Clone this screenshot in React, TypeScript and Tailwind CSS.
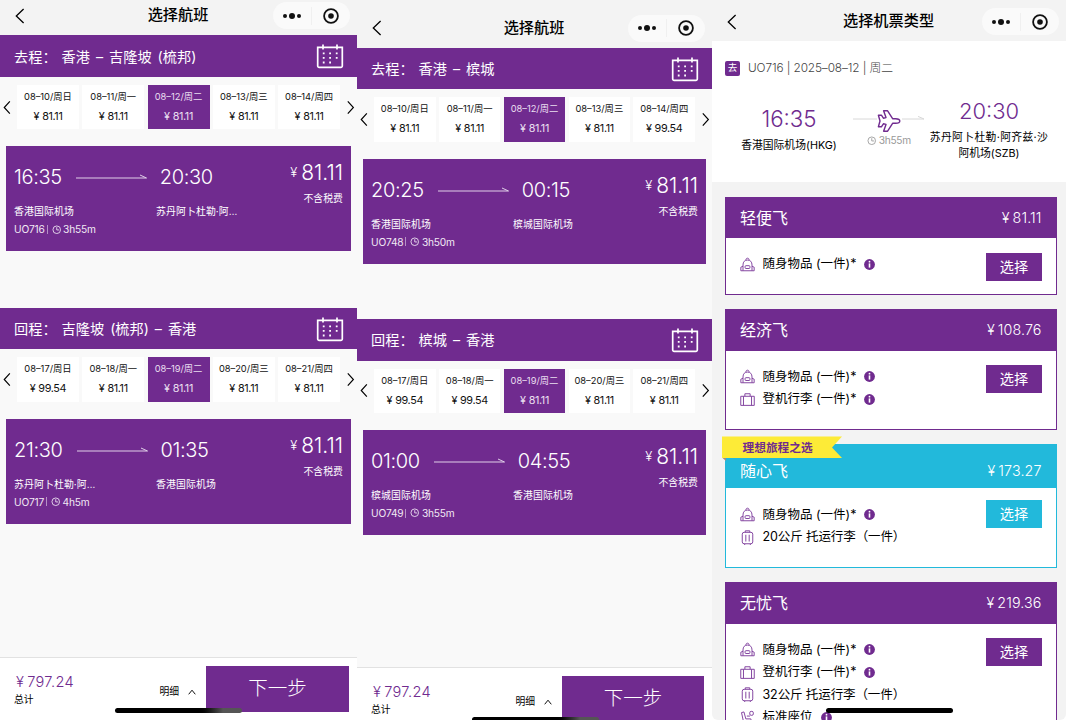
import type { ReactNode } from "react";
import clsx from "clsx";

type Day = [date: string, price: string];

type Leg = {
  label: string;
  route: string;
  days: Day[];
  depart: string;
  arrive: string;
  from: string;
  to: string;
  flight: string;
  duration: string;
};

type Perk = { icon: "backpack" | "briefcase" | "suitcase" | "seat"; text: string; info?: boolean };

type Fare = { name: string; price: string; perks: Perk[]; badge?: string; height: string };

const KUL: Leg[] = [
  {
    label: "去程：",
    route: "香港 – 吉隆坡 (梳邦)",
    days: [
      ["08–10/周日", "81.11"],
      ["08–11/周一", "81.11"],
      ["08–12/周二", "81.11"],
      ["08–13/周三", "81.11"],
      ["08–14/周四", "81.11"],
    ],
    depart: "16:35",
    arrive: "20:30",
    from: "香港国际机场",
    to: "苏丹阿卜杜勒·阿…",
    flight: "UO716",
    duration: "3h55m",
  },
  {
    label: "回程：",
    route: "吉隆坡 (梳邦) – 香港",
    days: [
      ["08–17/周日", "99.54"],
      ["08–18/周一", "81.11"],
      ["08–19/周二", "81.11"],
      ["08–20/周三", "81.11"],
      ["08–21/周四", "81.11"],
    ],
    depart: "21:30",
    arrive: "01:35",
    from: "苏丹阿卜杜勒·阿…",
    to: "香港国际机场",
    flight: "UO717",
    duration: "4h5m",
  },
];

const PEN: Leg[] = [
  {
    label: "去程：",
    route: "香港 – 槟城",
    days: [
      ["08–10/周日", "81.11"],
      ["08–11/周一", "81.11"],
      ["08–12/周二", "81.11"],
      ["08–13/周三", "81.11"],
      ["08–14/周四", "99.54"],
    ],
    depart: "20:25",
    arrive: "00:15",
    from: "香港国际机场",
    to: "槟城国际机场",
    flight: "UO748",
    duration: "3h50m",
  },
  {
    label: "回程：",
    route: "槟城 – 香港",
    days: [
      ["08–17/周日", "99.54"],
      ["08–18/周一", "99.54"],
      ["08–19/周二", "81.11"],
      ["08–20/周三", "81.11"],
      ["08–21/周四", "81.11"],
    ],
    depart: "01:00",
    arrive: "04:55",
    from: "槟城国际机场",
    to: "香港国际机场",
    flight: "UO749",
    duration: "3h55m",
  },
];

const BACKPACK: Perk = { icon: "backpack", text: "随身物品 (一件)*", info: true };
const CABIN: Perk = { icon: "briefcase", text: "登机行李 (一件)*", info: true };

const FARES: Fare[] = [
  { name: "轻便飞", price: "81.11", perks: [BACKPACK], height: "h-[98px]" },
  { name: "经济飞", price: "108.76", perks: [BACKPACK, CABIN], height: "h-[121px]" },
  {
    name: "随心飞",
    price: "173.27",
    perks: [BACKPACK, { icon: "suitcase", text: "20公斤 托运行李（一件）" }],
    badge: "理想旅程之选",
    height: "h-[123.4px]",
  },
  {
    name: "无忧飞",
    price: "219.36",
    perks: [
      BACKPACK,
      CABIN,
      { icon: "suitcase", text: "32公斤 托运行李（一件）" },
      { icon: "seat", text: "标准座位", info: true },
    ],
    height: "h-[170px]",
  },
];

function Chevron({ d, className }: { d: string; className?: string }) {
  return (
    <svg viewBox="0 0 10 16" className={className} fill="none" stroke="currentColor" strokeWidth="1.3">
      <path d={d} />
    </svg>
  );
}

function Clock({ className }: { className?: string }) {
  return (
    <svg viewBox="0 0 10 10" className={className} fill="none" stroke="currentColor" strokeWidth="0.9">
      <circle cx="5" cy="5" r="4" />
      <path d="M5 2.3V5.2H7.6" />
    </svg>
  );
}

function Calendar() {
  return (
    <svg viewBox="0 0 28 26" className="h-[26px] w-7" fill="none" stroke="#fff">
      <path d="M1.7 4.4H26.3V23a1.4 1.4 0 0 1-1.4 1.4H3.1A1.4 1.4 0 0 1 1.7 23Z" strokeWidth="1.7" />
      <path d="M7 1.4V6.4M21 1.4V6.4" strokeWidth="1.7" />
      <path
        d="M6.8 10.3h1.8M13.2 10.3h1.8M19.8 10.3h1.8M6.8 14.9h1.8M13.2 14.9h1.8M19.8 14.9h1.8M6.8 19.5h1.8M13.2 19.5h1.8"
        strokeWidth="1.8"
      />
    </svg>
  );
}

function InfoDot() {
  return (
    <svg viewBox="0 0 11 11" className="-mt-px h-[11px] w-[11px]">
      <circle cx="5.5" cy="5.5" r="5.4" fill="#702b8f" />
      <path d="M5.5 4.4V8.6" stroke="#fff" strokeWidth="1.6" fill="none" />
      <circle cx="5.5" cy="2.7" r="0.9" fill="#fff" />
    </svg>
  );
}

function PerkIcon({ name }: { name: Perk["icon"] }) {
  return (
    <svg viewBox="0 0 16 16" className="h-[15.5px] w-[15px] shrink-0" fill="none" stroke="#8344a0" strokeWidth="1.05">
      {name === "backpack" && (
        <>
          <path d="M3.2 14.4V8.2C3.2 4.8 5.1 3 8 3s4.8 1.8 4.8 5.2v6.2Z" />
          <path d="M6.3 3C6.3 1.7 7 1 8 1s1.7.7 1.7 2M3.2 9.6.9 10.6v3.8h2.3M12.8 9.6l2.3 1v3.8h-2.3" />
          <rect x="5.4" y="9" width="5.2" height="3" rx="1" />
        </>
      )}
      {name === "briefcase" && <path d="M.8 4.3H15.2V14H.8ZM3.7 4.3V14M12.3 4.3V14M5.2 4.2V1.6H10.8V4.2" />}
      {name === "suitcase" && (
        <>
          <rect x="2.4" y="2.2" width="11.2" height="12.2" rx="2" />
          <path d="M5.6 2.2V.6H10.4V2.2M5 14.4v1.3M11 14.4v1.3" />
          <path d="M6.2 4.8V12M9.8 4.8V12" />
        </>
      )}
      {name === "seat" && (
        <>
          <path d="M1.6 2.5 4.2 1.8 6.2 9.2H11.5L13 14.5M1.6 2.5 3.6 11.6H9.5L10.6 14.5M4 14.5V11.6M7.3 6.2H10.6" />
          <rect x="10.4" y="1.2" width="3.8" height="4.2" rx="1.5" />
        </>
      )}
    </svg>
  );
}

function TopBar({ title, className }: { title: string; className?: string }) {
  return (
    <header className={clsx("flex shrink-0 items-end bg-[#f3f3f3]", className)}>
      <div className="flex h-[27px] w-full items-center">
        <div className="w-[83px] pl-[15px]">
          <Chevron d="M8.6 1 1.3 8l7.3 7" className="h-4 w-2.5" />
        </div>
        <h1 className="flex-1 text-center text-[15.2px] font-medium">{title}</h1>
        <div className="mr-[7px] flex h-[27px] w-[77px] items-center rounded-full bg-[#fafafa]">
          <div className="flex flex-1 items-center justify-center gap-[2px]">
            <i className="h-1 w-1 rounded-full bg-[#111]" />
            <i className="h-1.5 w-1.5 rounded-full bg-[#111]" />
            <i className="h-1 w-1 rounded-full bg-[#111]" />
          </div>
          <div className="h-[18px] w-px bg-[#f0f0f0]" />
          <div className="flex flex-1 justify-center">
            <svg viewBox="0 0 16 16" className="h-4 w-4">
              <circle cx="8" cy="8" r="6.9" fill="none" stroke="#111" strokeWidth="1.8" />
              <circle cx="8" cy="8" r="2.8" fill="#111" />
            </svg>
          </div>
        </div>
      </div>
    </header>
  );
}

function Yen({ children, className }: { children: ReactNode; className?: string }) {
  return (
    <span className={clsx("whitespace-nowrap", className)}>
      <span className="mr-[3px]">¥</span>
      {children}
    </span>
  );
}

function LegBlock({ leg, className }: { leg: Leg; className?: string }) {
  return (
    <section className={clsx("shrink-0", className)}>
      <div className="flex h-[41.6px] items-center justify-between bg-[#702b8f] pr-[13px] pl-[14px] text-[14.2px] text-white">
        <h2 className="[word-spacing:2px]">
          <span className="mr-[5px]">{leg.label}</span>
          {leg.route}
        </h2>
        <Calendar />
      </div>
      <div className="flex items-center justify-between pt-[8px] pr-[2px] pl-[3px]">
        <Chevron d="M7.6 1.2 1.4 8 7.6 14.8" className="h-[15px] w-[9px]" />
        <ul className="flex flex-1 gap-[3.3px] pr-[6px] pl-[5px]">
          {leg.days.map(([date, price], i) => (
            <li
              key={date}
              className={clsx(
                "flex h-[44.4px] flex-1 flex-col items-center",
                i === 2 ? "bg-[#702b8f] text-[#eadff0]" : "bg-white text-[#111]"
              )}
            >
              <span className="mt-[4px] text-[9.3px] leading-4 whitespace-nowrap">{date}</span>
              <Yen className="mt-[4px] text-[10.8px] leading-4 tracking-[-0.35px]">{price}</Yen>
            </li>
          ))}
        </ul>
        <Chevron d="M2 1.2 8.2 8 2 14.8" className="h-[15px] w-[9px]" />
      </div>
      <div className="mx-[6px] mt-[16.8px] flex h-[105px] bg-[#702b8f] px-[8px] text-white">
        <div className="flex-1 pt-[18px]">
          <div className="flex h-[26px] items-center text-[20px] font-light tracking-[-0.35px]">
            <span>{leg.depart}</span>
            <svg viewBox="0 0 71 8" className="mr-[13px] ml-[14px] h-2 w-[71px]" fill="none" stroke="#e0d0e8">
              <path d="M0 5H70.5L64 2" />
            </svg>
            <span>{leg.arrive}</span>
          </div>
          <div className="mt-[13.2px] flex text-[9.9px] leading-4">
            <span className="w-[142px] tracking-[0.1px]">{leg.from}</span>
            <span className="tracking-[0.1px]">{leg.to}</span>
          </div>
          <div className="mt-[2px] flex items-center text-[10.2px] leading-4 tracking-[-0.2px] text-[#f1e9f4]">
            {leg.flight}
            <span className="mx-[2px] h-[9px] w-px bg-[#b68fc6]" />
            <Clock className="mr-[2px] ml-[2px] h-[9.5px] w-[9.5px]" />
            {leg.duration}
          </div>
        </div>
        <div className="flex flex-col items-end pt-[15px]">
          <div className="flex h-6 items-center">
            <span className="mr-[4px] text-[13px] font-light">¥</span>
            <span className="text-[21px] font-light">81.11</span>
          </div>
          <span className="mt-[5px] text-[9.9px] leading-4">不含税费</span>
        </div>
      </div>
    </section>
  );
}

function HomeBar({ className }: { className?: string }) {
  return <div className={clsx("absolute h-[5px] w-[127px] rounded-full", className)} />;
}

function FlightPicker({
  legs,
  className,
  barClass,
  legClass,
  footClass,
  nextClass,
  homeClass,
}: {
  legs: Leg[];
  className: string;
  barClass: string;
  legClass: string;
  footClass: string;
  nextClass: string;
  homeClass: string;
}) {
  return (
    <div className={clsx("relative flex h-full flex-col overflow-hidden bg-[#f9f9f9]", className)}>
      <TopBar title="选择航班" className={barClass} />
      {legs.map((leg) => (
        <LegBlock key={leg.label} leg={leg} className={legClass} />
      ))}
      <footer className={clsx("mt-auto flex shrink-0 border-t border-[#e2e2e2] bg-white pl-[14px]", footClass)}>
        <div className="flex-1 pt-[15px]">
          <Yen className="ml-[2px] block text-[14.6px] leading-[18px] font-light tracking-[0.3px] text-[#702b8f]">
            797.24
          </Yen>
          <div className="mt-px text-[9.8px] leading-4">总计</div>
        </div>
        <div className="mt-[26px] flex h-4 items-center text-[9.8px]">
          明细
          <svg viewBox="0 0 8 6" className="mr-[10px] ml-[9px] h-1.5 w-2" fill="none" stroke="#111">
            <path d="M.7 5.3 4 1.2l3.3 4.1" />
          </svg>
        </div>
        <button className={clsx("mt-[8px] mr-[8px] h-[46px] bg-[#702b8f] text-[19.5px] font-light text-white", nextClass)}>
          下一步
        </button>
      </footer>
      <HomeBar className={clsx("left-[115px] bg-gradient-to-r from-black from-65% to-[#555] to-85%", homeClass)} />
    </div>
  );
}

function FareCard({ fare }: { fare: Fare }) {
  const best = Boolean(fare.badge);
  return (
    <article
      className={clsx("relative shrink-0 border bg-white", fare.height, best ? "border-[#22b9db]" : "border-[#702b8f]")}
    >
      <div
        className={clsx(
          "flex justify-between px-[14.5px] text-white",
          best ? "h-[43px] items-end bg-[#22b9db] pb-[5.5px]" : "h-[40.4px] items-center bg-[#702b8f]"
        )}
      >
        <h3 className="text-[16px] leading-6">{fare.name}</h3>
        <Yen className="text-[14.3px] leading-6 font-light tracking-[0.1px]">{fare.price}</Yen>
      </div>
      <div className="flex justify-between pt-[15.2px] pr-[14px] pl-[14.5px]">
        <ul>
          {fare.perks.map((perk) => (
            <li key={perk.text} className="flex h-[22.5px] items-center text-[12.5px] whitespace-nowrap">
              <PerkIcon name={perk.icon} />
              <span className={clsx("mr-[8px] ml-[7.5px]", perk.icon === "suitcase" && "tracking-[-0.1px]")}>
                {perk.text}
              </span>
              {perk.info && <InfoDot />}
            </li>
          ))}
        </ul>
        <button
          className={clsx(
            "h-7 w-14 text-[14.2px] text-white",
            best ? "-mt-[4px] bg-[#22b9db]" : "-mt-[0.8px] bg-[#702b8f]"
          )}
        >
          选择
        </button>
      </div>
      {fare.badge && (
        <div className="absolute -top-[9px] -left-[4px] h-[25px] w-[121px]">
          <svg viewBox="0 0 121 25" className="absolute inset-0 h-[25px] w-[121px]">
            <path d="M0 21.5H4V25Z" fill="#a58a80" />
            <path d="M0 0.5H120L110 11.5 120 22H0Z" fill="#fdeb37" />
          </svg>
          <span className="relative ml-[21px] block text-[11.7px] leading-[25px] font-bold text-[#702b8f]">
            {fare.badge}
          </span>
        </div>
      )}
    </article>
  );
}

function FarePicker() {
  return (
    <div className="relative flex h-full w-[354px] flex-col overflow-hidden rounded-b-[6px] bg-[#f3f3f3]">
      <TopBar title="选择机票类型" className="h-[41.4px] pb-[6px]" />
      <section className="h-[141px] shrink-0 bg-white pt-[18px]">
        <div className="flex items-center pl-[13px] text-[11.8px] leading-[18px] font-light tracking-[-0.1px] text-[#444]">
          <span className="mr-[8px] flex h-[15.5px] w-[15px] items-center justify-center rounded-[2px] bg-[#702b8f] text-[9.5px] font-normal text-white">
            去
          </span>
          UO716 | 2025–08–12 | 周二
        </div>
        <div className="flex pl-[19px]">
          <div className="w-[116px] pt-[28px] text-center">
            <div className="text-[22.3px] leading-7 font-light text-[#702b8f]">16:35</div>
            <div className="mt-[5px] text-[10.8px] leading-4">香港国际机场(HKG)</div>
          </div>
          <div className="ml-[6px] flex w-[72px] flex-col items-center pt-[32px]">
            <svg viewBox="0 0 72 24" className="h-6 w-[72px]" fill="none">
              <path d="M0 10H24M49 10H71L65 7.4" stroke="#d8d8d8" />
              <path
                d="M46.8 12C46.8 10.6 44.8 9.7 42.6 9.7H39.6L34.6 1.8H30.6L33 8.6 30.4 9.2 28.4 6.2H25.4L27 12 25.4 17.8H28.4L30.4 14.8 33 15.4 30.6 22.2H34.6L39.6 14.3H42.6C44.8 14.3 46.8 13.4 46.8 12Z"
                stroke="#702b8f"
                strokeWidth="1.4"
                strokeLinejoin="round"
              />
            </svg>
            <div className="-mt-px flex items-center text-[10.2px] leading-4 tracking-[-0.3px] text-[#999]">
              <Clock className="mr-[2px] h-[9.5px] w-[9.5px]" />
              3h55m
            </div>
          </div>
          <div className="w-[128px] pt-[20px] text-center">
            <div className="text-[22px] leading-7 font-light text-[#702b8f]">20:30</div>
            <div className="mt-[5px] text-[10.8px] leading-4">
              <div className="tracking-[0.35px] whitespace-nowrap">苏丹阿卜杜勒·阿齐兹·沙</div>
              <div>阿机场(SZB)</div>
            </div>
          </div>
        </div>
      </section>
      <div className="flex flex-col gap-[14.3px] pt-[14.5px] pr-[9px] pl-[12.5px]">
        {FARES.map((fare) => (
          <FareCard key={fare.name} fare={fare} />
        ))}
      </div>
      <HomeBar className="top-[708px] left-[114px] bg-black" />
    </div>
  );
}

export default function App() {
  return (
    <main className="flex h-[720px] w-[1066px] overflow-hidden bg-white font-[Inter,'Noto_Sans_CJK_SC',sans-serif] text-black">
      <FlightPicker
        legs={KUL}
        className="w-[357px]"
        barClass="h-[35.4px] pb-[6px]"
        legClass="h-[272.5px]"
        footClass="h-[63px]"
        nextClass="w-[143px]"
        homeClass="top-[708px]"
      />
      <FlightPicker
        legs={PEN}
        className="w-[355px]"
        barClass="h-[47.8px] pb-[6px]"
        legClass="h-[271.3px]"
        footClass="h-[53px]"
        nextClass="w-[142px]"
        homeClass="top-[717px]"
      />
      <FarePicker />
    </main>
  );
}
